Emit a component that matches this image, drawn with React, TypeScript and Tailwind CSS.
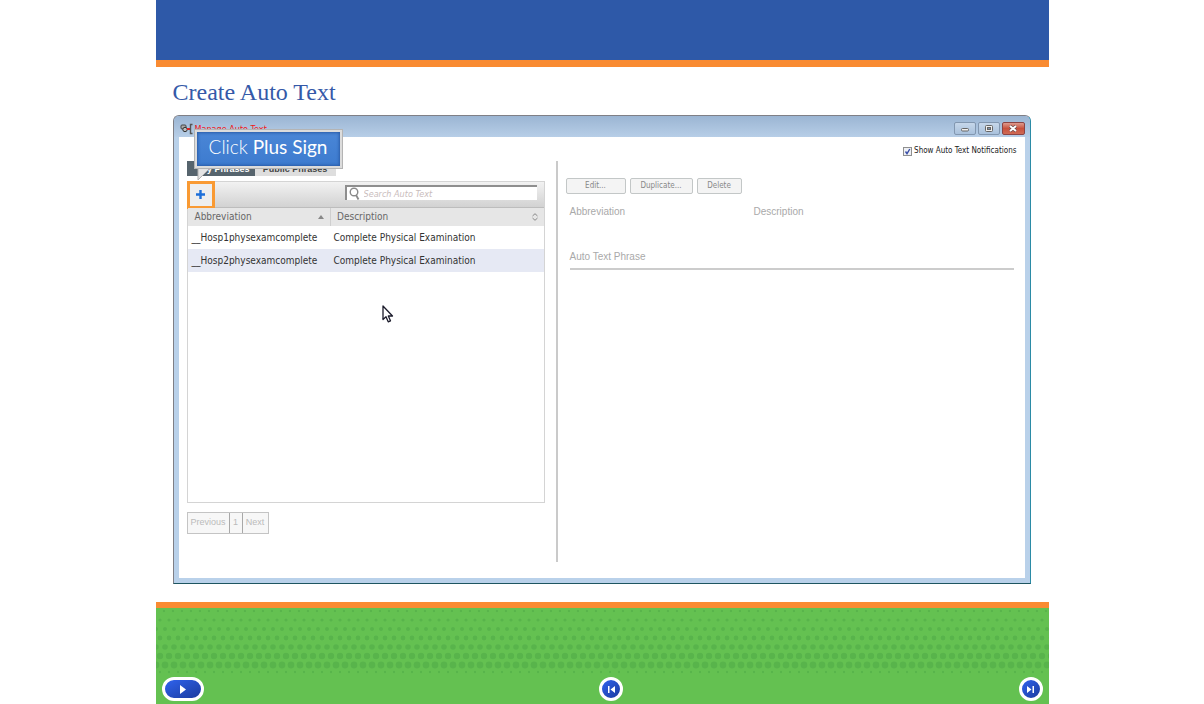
import { ReactNode, useState } from 'react';

const phrases = [
  { abbreviation: '__Hosp1physexamcomplete', description: 'Complete Physical Examination' },
  { abbreviation: '__Hosp2physexamcomplete', description: 'Complete Physical Examination' },
];

// one entry per row of dots, top to bottom
const dotRows = [
  { y: 3, r: 1.2, x: 8 },
  { y: 12, r: 1.6, x: 4 },
  { y: 21, r: 2, x: 0 },
  { y: 30, r: 2.4, x: 4 },
  { y: 39, r: 2.8, x: 0 },
  { y: 48, r: 3.2, x: 4 },
  { y: 57, r: 3.4, x: 0 },
  { y: 64, r: 1.2, x: 4 },
];

const DotPattern = () => (
  <svg className="block w-full h-[66px]" aria-hidden="true">
    <defs>
      <pattern id="dots" width="9" height="66" patternUnits="userSpaceOnUse">
        {dotRows.map(({ y, r, x }) => (
          <g key={y} fill="#58b44b">
            <circle cx={x} cy={y} r={r} />
            <circle cx={x + 9} cy={y} r={r} />
          </g>
        ))}
      </pattern>
    </defs>
    <rect width="100%" height="66" fill="url(#dots)" />
  </svg>
);

const MagnifierIcon = () => (
  <svg className="shrink-0" width="11" height="13" viewBox="0 0 11 13" fill="none" stroke="#8a8a8a" aria-hidden="true">
    <circle cx="5" cy="5" r="3.8" strokeWidth="1.4" />
    <path d="M7 8l2.5 4.5" strokeWidth="1.8" />
  </svg>
);

const AppIcon = () => (
  <svg width="13" height="12" viewBox="0 0 13 12" fill="none" aria-hidden="true">
    <rect x="1" y="2" width="5" height="4" rx="1" fill="#aaa" stroke="#444" />
    <circle cx="5" cy="6.500" r="2.200" fill="#bbb" stroke="#333" />
    <path d="M7 6h3" stroke="#e02020" strokeWidth="2" />
    <path d="M12.500 1.500h-2v9h2" stroke="#555" strokeWidth="1.4" />
  </svg>
);

type WindowButtonProps = {
  label: string;
  close?: boolean;
  children: ReactNode;
};
const WindowButton = ({ label, close, children }: WindowButtonProps) => (
  <button
    aria-label={label}
    className={
      close
        ? 'flex items-center justify-center w-[23px] h-[13px] rounded-xs border border-[#8c4343] bg-linear-to-b from-[#dd9a8e] via-[#c8503c] to-[#cf6a55]'
        : 'flex items-center justify-center w-[22px] h-[13px] rounded-xs border border-[#8297b0] bg-linear-to-b from-[#c6d7ea] to-[#a9c1dc]'
    }
  >
    <svg width="12" height="9" viewBox="0 0 12 9" fill="none" aria-hidden="true">
      {children}
    </svg>
  </button>
);

const TitleBar = () => (
  <div className="flex items-center justify-between h-[21px] pl-[6px] pr-[5px] pt-[4px] bg-linear-to-b from-[#9bb5d3] to-[#b7cee7]">
    <div className="flex items-center gap-[2px] text-[9px] leading-3 text-[#f01818]">
      <AppIcon />
      <span>Manage Auto Text</span>
    </div>
    <div className="flex gap-[2px]">
      <WindowButton label="Minimize">
        <rect x="2.5" y="4.5" width="7" height="2.5" rx="1" fill="#eee" stroke="#666" />
      </WindowButton>
      <WindowButton label="Maximize">
        <rect x="2.5" y="1.5" width="7" height="6" rx="1" fill="#eee" stroke="#666" />
        <rect x="4.5" y="3.5" width="3" height="2" fill="#7b93ad" stroke="#666" />
      </WindowButton>
      <WindowButton label="Close" close>
        <path d="M3 2l6 5M9 2l-6 5" stroke="#64464a" strokeWidth="3.2" />
        <path d="M3 2l6 5M9 2l-6 5" stroke="#fff" strokeWidth="2" />
      </WindowButton>
    </div>
  </div>
);

const Callout = () => (
  <div className="absolute left-2 -top-[31px] z-10">
    <div className="flex items-center justify-center w-[147px] h-[38px] border-2 border-[#dcdcdc] outline outline-[#b4b4b4] bg-linear-to-b from-[#4a86d6] to-[#3d7bcf] shadow-[inset_0_0_3px_1px_#2a5ca8]">
      <span className="pb-1 text-[19px] leading-6 whitespace-nowrap text-white font-['Lato',sans-serif]">
        <span className="font-light">Click</span> Plus Sign
      </span>
    </div>
    <svg className="block" width="20" height="13" viewBox="0 0 20 13" aria-hidden="true">
      <path d="M3 0v12L15 0z" fill="#e4e4e4" />
      <path d="M3 1v11L14 1" fill="none" stroke="#b0b0b0" />
    </svg>
  </div>
);

const PhraseList = () => {
  const [search, setSearch] = useState<string>('');

  return (
    <section className="relative flex flex-col w-[371px] shrink-0 border-r-2 border-[#cacaca] pr-[11px] mt-[24px] mb-[16px]">
      <div className="flex h-[15px] text-[9px] leading-[14px] font-bold font-['Liberation_Sans',sans-serif]">
        <button className="w-[68px] pl-2 bg-[#56646d] text-white">My Phrases</button>
        <button className="w-[81px] bg-[#dedede] text-[#444]">Public Phrases</button>
      </div>

      <div className="mt-[5px] flex flex-col border border-[#d4d4d4] h-[322px]">
        {/* toolbar */}
        <div className="flex items-center justify-between h-[26px] pr-[7px] border-b border-[#bdbdbd] bg-linear-to-b from-[#f2f2f2] to-[#d2d2d2]">
          <button
            aria-label="Add auto text"
            className="-ml-px flex items-center justify-center w-[28px] h-[28px] border-3 border-[#f99a33] bg-[#eeeeee]"
          >
            <svg width="9" height="9" viewBox="0 0 9 9" aria-hidden="true">
              <path d="M4.5 0v9M0 4.5h9" stroke="#1e6fd9" strokeWidth="2.4" />
            </svg>
          </button>
          <label className="flex items-center gap-1 w-[192px] h-[15px] mb-1 pl-[2px] bg-white border-t-2 border-l-2 border-[#8e8e8e]">
            <MagnifierIcon />
            <input
              type="text"
              aria-label="Search Auto Text"
              placeholder="Search Auto Text"
              value={search}
              onChange={(e) => setSearch(e.target.value)}
              className="w-full min-w-0 text-[9px] leading-3 italic placeholder:text-[#c9bcbc] outline-none"
            />
          </label>
        </div>

        <table className="w-full table-fixed border-collapse text-left text-[10px] leading-4">
          <thead>
            <tr className="h-[18px] bg-[#e6e6e6] text-[#666]">
              <th className="w-[143px] pl-[7px] pr-[6px] font-normal border-r border-[#cfcfcf]">
                <div className="flex items-center justify-between">
                  Abbreviation
                  <svg width="6" height="4" viewBox="0 0 6 4" aria-hidden="true">
                    <path d="M0 4l3-4 3 4z" fill="#888" />
                  </svg>
                </div>
              </th>
              <th className="pl-[6px] pr-[6px] font-normal">
                <div className="flex items-center justify-between">
                  Description
                  <svg width="6" height="8" viewBox="0 0 6 8" fill="none" stroke="#888" aria-hidden="true">
                    <path d="M.5 3L3 .7 5.500 3M.5 5L3 7.300 5.500 5" />
                  </svg>
                </div>
              </th>
            </tr>
          </thead>
          <tbody>
            {phrases.map((phrase) => (
              <tr key={phrase.abbreviation} className="h-[23px] even:bg-[#e6e9f4] text-[#333]">
                <td className="pl-[4px]">{phrase.abbreviation}</td>
                <td className="pl-[3px]">{phrase.description}</td>
              </tr>
            ))}
          </tbody>
        </table>
      </div>

      {/* pagination */}
      <div className="mt-[9px] flex self-start h-[22px] border border-[#c4c4c4] divide-x divide-[#a8a8a8] bg-[#f7f7f7] text-[9px] text-[#bbb] font-['Liberation_Sans',sans-serif]">
        <button className="w-[42px]">Previous</button>
        <button className="w-[13px]">1</button>
        <button className="w-[25px]">Next</button>
      </div>

      <Callout />
    </section>
  );
};

const DetailPane = () => {
  const [notify, setNotify] = useState<boolean>(true);

  return (
    <section className="flex flex-col flex-1 min-w-0 pl-[8px] pr-[8px] pt-[8px]">
      <label className="flex items-center gap-[2px] self-end text-[8px] leading-3 text-[#222] whitespace-nowrap">
        <span className="grid">
          <input
            type="checkbox"
            checked={notify}
            onChange={(e) => setNotify(e.target.checked)}
            className="peer col-start-1 row-start-1 appearance-none size-[9px] border border-[#8f8f8f] bg-[#eef0f4]"
          />
          <svg
            className="col-start-1 row-start-1 invisible peer-checked:visible pointer-events-none"
            width="9"
            height="9"
            viewBox="0 0 9 9"
            fill="none"
            aria-hidden="true"
          >
            <path d="M2.500 4.500l1.500 2.200L6.800 2" stroke="#3b4fa8" strokeWidth="1.4" />
          </svg>
        </span>
        Show Auto Text Notifications
      </label>

      <div className="mt-[21px] flex gap-1 text-[8px] leading-3 text-[#888]">
        <button className="w-[60px] h-[16px] rounded-xs border border-[#c3c7c7] bg-[#f4f4f4]">Edit...</button>
        <button className="w-[63px] h-[16px] rounded-xs border border-[#c3c7c7] bg-[#f4f4f4]">Duplicate...</button>
        <button className="w-[45px] h-[16px] rounded-xs border border-[#c3c7c7] bg-[#f4f4f4]">Delete</button>
      </div>

      <div className="mt-[10px] ml-[4px] mr-[3px] text-[10px] leading-4 text-[#a9a9a9] font-['Liberation_Sans',sans-serif]">
        <div className="flex">
          <h2 className="w-[184px]">Abbreviation</h2>
          <h2>Description</h2>
        </div>
        <h2 className="mt-[29px] pb-[3px] border-b-2 border-[#cccccc]">Auto Text Phrase</h2>
      </div>
    </section>
  );
};

const MouseCursor = () => (
  <svg className="absolute left-[203px] top-[168px]" width="12" height="18" viewBox="0 0 12 18" aria-hidden="true">
    <path
      d="M1 1v13.500l3-2.700 2.200 5 2.300-1-2.200-4.800H10.500z"
      fill="#fff"
      stroke="#1c1c2c"
      strokeWidth="1.300"
      strokeLinejoin="round"
    />
  </svg>
);

const roundButton =
  'flex items-center justify-center h-6 rounded-full border-3 border-white bg-linear-to-br from-[#2f63ee] to-[#1b3b9e]';

export default function App() {
  return (
    <div className="min-h-screen bg-white font-['DejaVu_Sans_Condensed','DejaVu_Sans',sans-serif]">
      <div className="mx-auto flex flex-col w-full max-w-[893px] min-h-screen">
        <header className="h-[67px] bg-[#2e59a8] border-b-7 border-[#f98b32]" />

        <main className="flex flex-col flex-1 pl-[17px] pr-[18px] pb-[18px]">
          <h1 className="mt-[9px] mb-[7px] text-[24px] leading-8 text-[#3559a8] font-['Liberation_Serif',serif]">
            Create Auto Text
          </h1>

          <div className="flex flex-col flex-1 rounded-t-md overflow-hidden border border-[#7f7f86] border-r-[#2b8ba6] border-b-[#1d5560] bg-[#b9d1ea]">
            <TitleBar />
            <div className="relative flex flex-1 mx-[5px] mb-[5px] bg-white">
              <div className="flex pl-[8px]">
                <PhraseList />
              </div>
              <DetailPane />
              <MouseCursor />
            </div>
          </div>
        </main>

        <footer className="border-t-6 border-[#f98b32] bg-[#64c151]">
          <DotPattern />
          <nav className="flex items-center justify-between h-[30px] px-[6px]">
            <button aria-label="Play" className={`${roundButton} w-[42px]`}>
              <svg width="6" height="9" viewBox="0 0 6 9" aria-hidden="true">
                <path d="M0 0l6 4.500L0 9z" fill="#fff" />
              </svg>
            </button>
            <button aria-label="Previous slide" className={`${roundButton} w-6`}>
              <svg width="7" height="7" viewBox="0 0 7 7" aria-hidden="true">
                <path d="M0 0h1.500v7H0zM7 0v7L2.500 3.500z" fill="#fff" />
              </svg>
            </button>
            <button aria-label="Next slide" className={`${roundButton} w-6`}>
              <svg width="7" height="7" viewBox="0 0 7 7" aria-hidden="true">
                <path d="M5.500 0H7v7H5.500zM0 0v7l4.500-3.500z" fill="#fff" />
              </svg>
            </button>
          </nav>
        </footer>
      </div>
    </div>
  );
}
